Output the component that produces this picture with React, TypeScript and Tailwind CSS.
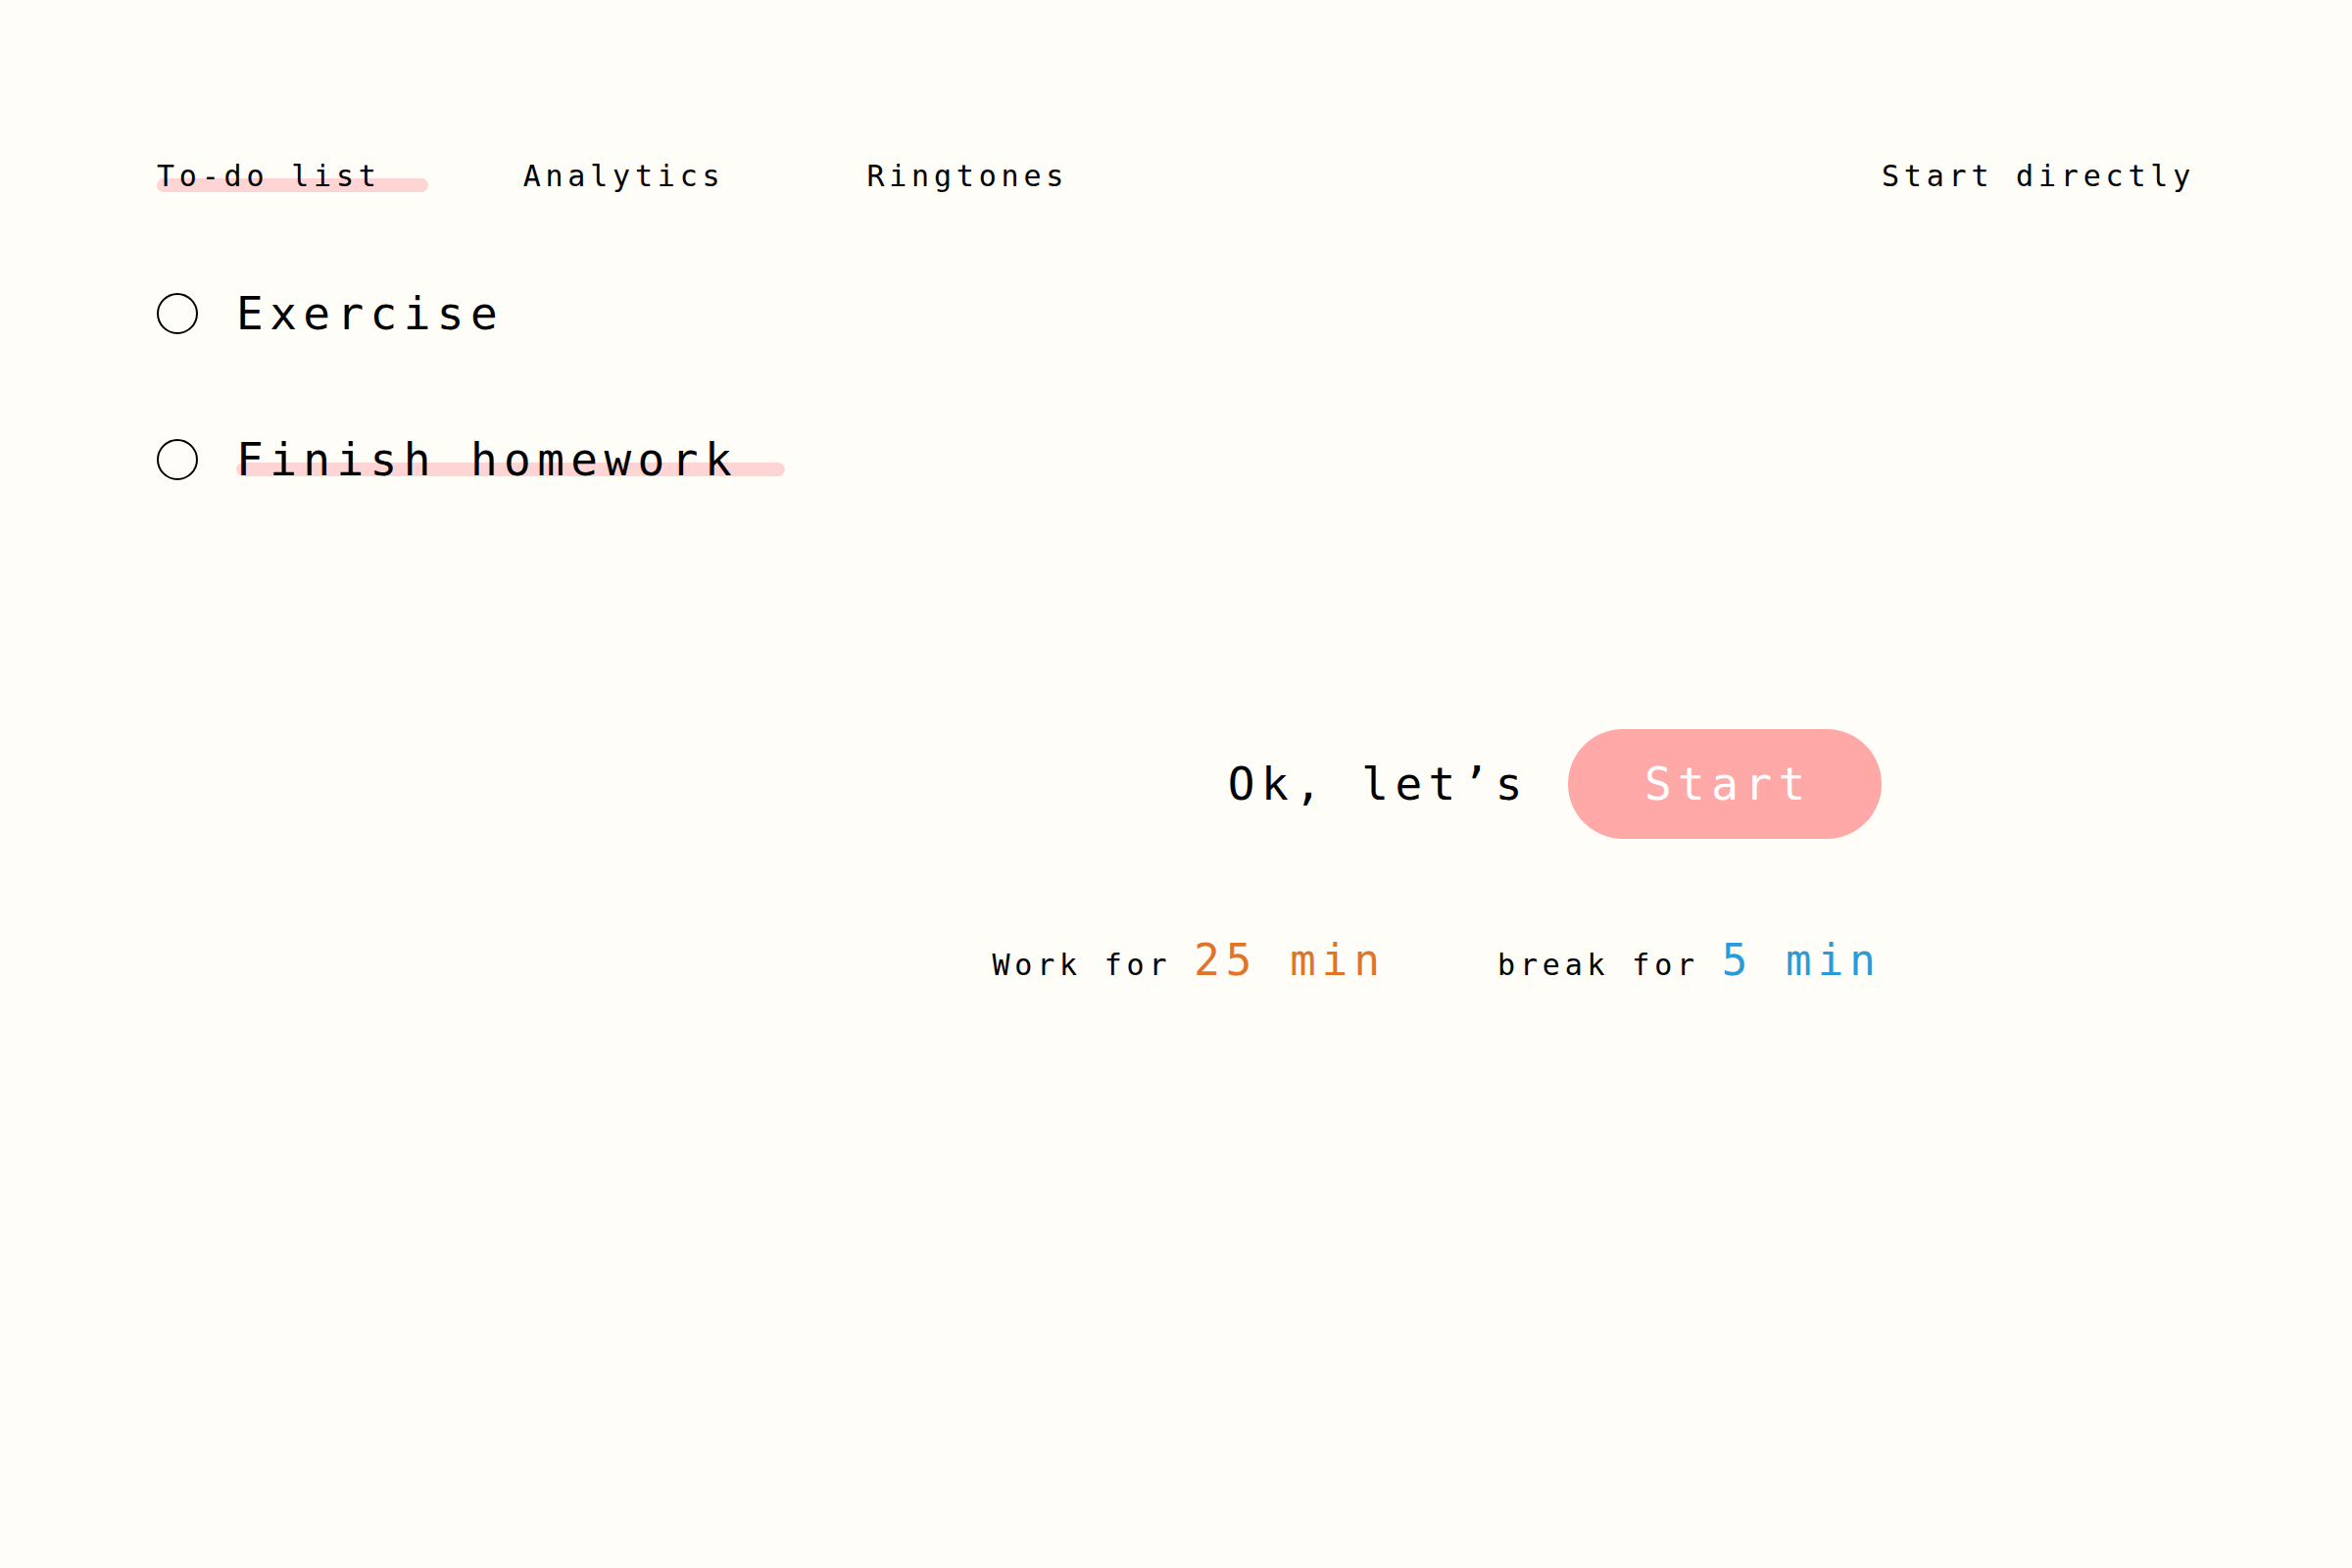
import { useState } from "react";

const todos = [
  { id: 1, title: "Exercise", highlight: false },
  { id: 2, title: "Finish homework", highlight: true },
];

const navItems = ["To-do list", "Analytics", "Ringtones"];

export default function App() {
  const [active] = useState("To-do list");

  return (
    <div className="min-h-screen bg-[#fffdf8] px-[160px] pt-[165px] font-['DejaVu_Sans_Mono',monospace] text-black">
      {/* top nav */}
      <nav className="flex justify-between text-[30px] leading-none tracking-[0.16em]">
        <div className="flex gap-[145px]">
          {navItems.map((item) => (
            <button key={item} className="relative leading-none tracking-[0.16em]">
              {item === active && (
                <span className="absolute left-0 right-[-48px] top-[17px] h-[14px] rounded-full bg-[#ffd4d4]" />
              )}
              <span className="relative">{item}</span>
            </button>
          ))}
        </div>
        <button className="leading-none tracking-[0.16em]">Start directly</button>
      </nav>

      {/* to-do items */}
      <ul className="mt-[102px] flex flex-col gap-[103px]">
        {todos.map((todo) => (
          <li key={todo.id} className="flex items-center gap-[39px]">
            <span className="h-[42px] w-[42px] shrink-0 rounded-full border-2 border-black" />
            <span className="relative text-[46px] leading-none tracking-[0.14em]">
              {todo.highlight && (
                <span className="absolute left-0 right-[-48px] top-[26px] h-[14px] rounded-full bg-[#ffd4d4]" />
              )}
              <span className="relative">{todo.title}</span>
            </span>
          </li>
        ))}
      </ul>

      {/* start area */}
      <div className="mt-[252px] flex flex-col items-end pr-[320px]">
        <div className="flex items-center gap-[40px]">
          <span className="text-[46px] leading-none tracking-[0.14em]">Ok, let’s</span>
          <button className="flex h-[112px] w-[320px] items-center justify-center rounded-full bg-[#ffa8a8] text-[46px] leading-none tracking-[0.14em] text-white">
            <span className="pl-[0.14em]">Start</span>
          </button>
        </div>

        <div className="mt-[102px] flex items-baseline gap-[114px] text-[30px] leading-none tracking-[0.16em]">
          <p className="leading-none">
            Work for <span className="text-[44px] leading-none tracking-[0.14em] text-[#e0752a]">25 min</span>
          </p>
          <p className="leading-none">
            break for <span className="text-[44px] leading-none tracking-[0.14em] text-[#2a9bd8]">5 min</span>
          </p>
        </div>
      </div>
    </div>
  );
}
